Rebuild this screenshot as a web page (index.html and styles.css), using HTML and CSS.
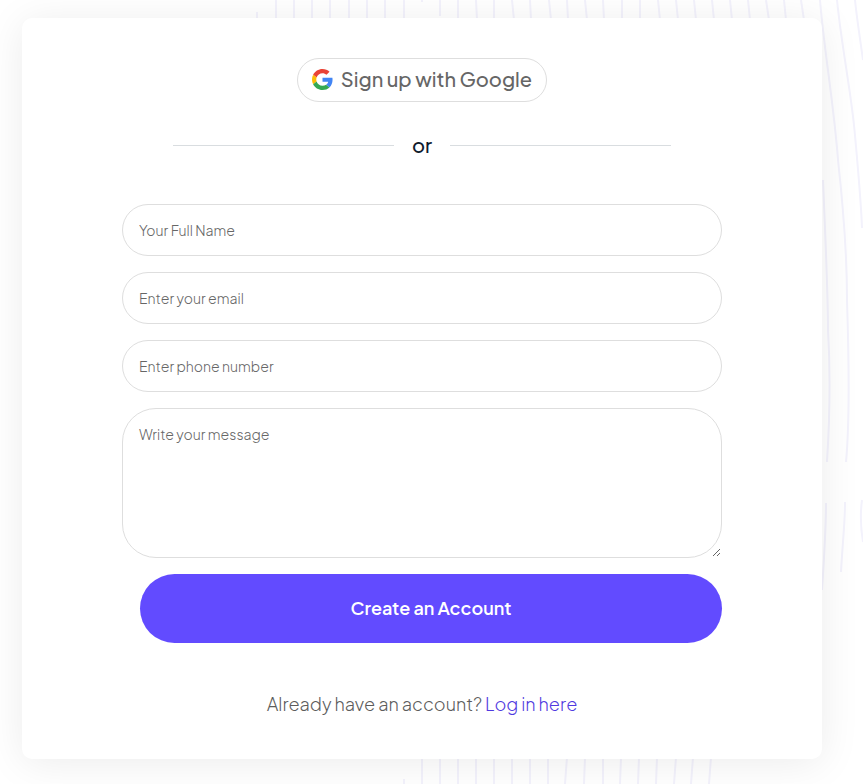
FILE: index.html
```html
<!DOCTYPE html>
<html lang="en">
<head>
    <meta charset="utf-8">
    <meta name="viewport" content="width=device-width, initial-scale=1">
    <title>Create an Account</title>
    <link rel="stylesheet" href="styles.css">
</head>
<body>
    <!-- decorative lines behind the card -->
    <svg class="bg-lines" width="863" height="784" viewBox="0 0 863 784" fill="none" aria-hidden="true">
        <path d="M257 12v8M276 0v20M294 0v20M312 0v20M330 0v20M349 0v20M367 0v20M385 0v20M404 0v20M422 0v2M440 0v16M458 0v20M476 0l1 20M494 0v20M512 0l2 20M530 0l1 20M549 0l2 20M567 0l1 20M585 0l2 20M603 0l1 20M622 0v20M640 0v20M658 0l2 20M676 0l2 20M694 0l2 20M712 0l2 20M730 0l2 20M748 0l2 20M766 0l3 20M784 0l2 20M801 0l3 20"/>
        <path d="M820 0C824 50 834 105 838 160C843 205 847 250 847 300C849 360 850 420 846 462"/>
        <path d="M837 0C842 50 851 90 855 135C858 170 861 200 862 228M855 0C857 20 861 45 863 60"/>
        <path d="M823 180C825 230 828 290 828 330C831 380 829 430 827 462"/>
        <path d="M826 503C826 530 824 560 822 590M845 502C845 525 842 550 841 572M862 500C860 515 861 530 863 542"/>
        <path d="M404 779v5M422 757v27M440 757v27M458 757v27M476 757v27M494 757v27M512 757v27M530 757v27M548 757v27M567 757l-2 27M585 757l-1 27M603 757v27M621 757l-1 27M639 757l-1 27M657 757l-1 27M676 757l-2 27M693 757l-2 27M711 757l-2 27"/>
    </svg>

    <main class="signup-card">
        <button type="button" class="google-btn">
            <svg class="google-icon" viewBox="0 0 48 48" aria-hidden="true">
                <path fill="#EA4335" d="M24 9.5c3.54 0 6.71 1.22 9.21 3.6l6.85-6.85C35.9 2.38 30.47 0 24 0 14.62 0 6.51 5.38 2.56 13.22l7.98 6.19C12.43 13.72 17.74 9.5 24 9.5z"/>
                <path fill="#4285F4" d="M46.98 24.55c0-1.57-.15-3.09-.38-4.55H24v9.02h12.94c-.58 2.96-2.26 5.48-4.78 7.18l7.73 6c4.51-4.18 7.09-10.36 7.09-17.65z"/>
                <path fill="#FBBC05" d="M10.53 28.59c-.48-1.45-.76-2.99-.76-4.59s.27-3.14.76-4.59l-7.98-6.19C.92 16.46 0 20.12 0 24c0 3.88.92 7.54 2.56 10.78l7.97-6.19z"/>
                <path fill="#34A853" d="M24 48c6.48 0 11.93-2.13 15.89-5.81l-7.73-6c-2.15 1.45-4.92 2.3-8.16 2.3-6.26 0-11.57-4.22-13.47-9.91l-7.98 6.19C6.51 42.62 14.62 48 24 48z"/>
            </svg>
            <span>Sign up with Google</span>
        </button>

        <div class="divider"><span>or</span></div>

        <form class="signup-form">
            <input type="text" name="name" placeholder="Your Full Name" aria-label="Your Full Name">
            <input type="email" name="email" placeholder="Enter your email" aria-label="Enter your email">
            <input type="tel" name="phone" placeholder="Enter phone number" aria-label="Enter phone number">
            <textarea name="message" placeholder="Write your message" aria-label="Write your message"></textarea>
            <button type="submit" class="submit-btn">Create an Account</button>
        </form>

        <p class="login-text">Already have an account? <a href="#">Log in here</a></p>
    </main>
</body>
</html>
```
FILE: styles.css
```css
* { box-sizing: border-box; }
body {
    margin: 0;
    padding: 18px 41px 25px 22px;
    background-color: #fff;
    color: #5c5c5c;
    font-family: "Plus Jakarta Sans", Inter, sans-serif;
}

.bg-lines { position: absolute; top: 0; left: 0; z-index: -1; stroke: #f3f2fc; stroke-width: 2; }

.signup-card {
    display: flex;
    flex-direction: column;
    align-items: center;
    padding: 40px 100px 42px;
    background-color: #fff;
    border-radius: 10px;
    box-shadow: 0 4px 40px rgba(0,0,0,0.08);
}

.google-btn {
    display: flex;
    align-items: center;
    gap: 8px;
    height: 44px;
    padding: 0 14px 2px;
    background-color: #fff;
    border: 1px solid #dedede;
    border-radius: 22px;
    color: #666;
    font: 500 20px/24px "Plus Jakarta Sans", Inter, sans-serif;
    cursor: pointer;
}
.google-icon { width: 21px; height: 21px; }

.divider {
    display: flex;
    align-items: center;
    gap: 18px;
    width: calc(100% - 102px);
    margin: 29px 0 45px;
    color: #0f1b2d;
    font-size: 20px;
    font-weight: 500;
    line-height: 28px;
}
.divider::before, .divider::after { content: ""; flex: 1; height: 1px; background-color: #d9dde0; }

.signup-form { display: flex; flex-direction: column; gap: 16px; width: 100%; }
.signup-form input, .signup-form textarea {
    width: 100%;
    padding: 15px 16px;
    background-color: #fff;
    border: 1px solid #dedede;
    color: #333;
    font-family: inherit;
    font-size: 14px;
    font-weight: 300;
    line-height: 20px;
}
.signup-form input { height: 52px; border-radius: 26px; }
.signup-form textarea { height: 150px; border-radius: 34px; resize: vertical; }
.signup-form ::placeholder { color: #666; }

.submit-btn {
    height: 69px;
    margin-left: 18px;
    padding: 0 0 2px;
    background-color: #624bff;
    border: none;
    border-radius: 35px;
    color: #fff;
    font-family: inherit;
    font-size: 18px;
    font-weight: 600;
    cursor: pointer;
}

.login-text { margin: 48px 0 0; font-size: 18px; font-weight: 300; line-height: 26px; }
.login-text a { color: #5039e0; text-decoration: none; }
```
